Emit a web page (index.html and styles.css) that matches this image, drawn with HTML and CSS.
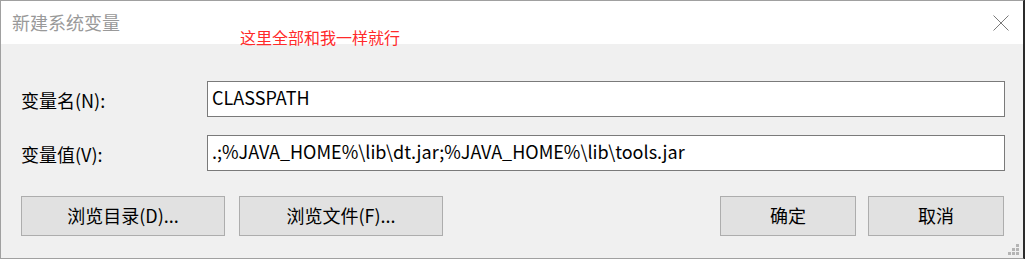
FILE: index.html
```html
<!DOCTYPE html>
<html lang="zh-CN">
<head>
<meta charset="utf-8">
<title>新建系统变量</title>
<link rel="stylesheet" href="styles.css">
</head>
<body>
<div class="window">
  <div class="titlebar">
    <span class="title">新建系统变量</span>
    <span class="close" aria-label="关闭">
      <svg width="16" height="16" viewBox="0 0 16 16"><path d="M0.5 0.5 L15.5 15.5 M15.5 0.5 L0.5 15.5" stroke="#7a7a7a" stroke-width="1" fill="none"/></svg>
    </span>
  </div>
  <div class="note">这里全部和我一样就行</div>
  <div class="content">
    <div class="form">
      <label class="label">变量名(N):</label>
      <div class="field">CLASSPATH</div>
      <label class="label">变量值(V):</label>
      <div class="field">.;%JAVA_HOME%\lib\dt.jar;%JAVA_HOME%\lib\tools.jar</div>
    </div>
    <div class="buttons">
      <div class="group">
        <button class="btn wide">浏览目录(D)...</button>
        <button class="btn wide">浏览文件(F)...</button>
      </div>
      <div class="group right">
        <button class="btn">确定</button>
        <button class="btn">取消</button>
      </div>
    </div>
    <div class="grip">
      <svg width="12" height="12" viewBox="0 0 12 12" fill="#b4b4b4">
        <rect x="8" y="0" width="3" height="3"/>
        <rect x="4" y="4" width="3" height="3"/><rect x="8" y="4" width="3" height="3"/>
        <rect x="0" y="8" width="3" height="3"/><rect x="4" y="8" width="3" height="3"/><rect x="8" y="8" width="3" height="3"/>
      </svg>
    </div>
  </div>
</div>
</body>
</html>
```
FILE: styles.css
```css
html, body {
  margin: 0;
  padding: 0;
  background: #2b2b2b;
}
body {
  width: 1025px;
  height: 259px;
  overflow: hidden;
  font-family: "Noto Sans CJK SC", "Noto Sans", sans-serif;
}
.window {
  position: relative;
  box-sizing: border-box;
  width: 1024px;
  height: 259px;
  border: 1px solid #a0a0a0;
  border-right-color: #2b2b2b;
  background: #f0f0f0;
  display: flex;
  flex-direction: column;
}
.titlebar {
  height: 43px;
  background: #ffffff;
  display: flex;
  align-items: center;
  justify-content: space-between;
  padding: 0 14px 0 11px;
  flex: none;
}
.title {
  font-size: 18px;
  color: #999999;
  line-height: 1;
  margin-top: -2px;
}
.close {
  display: flex;
  width: 16px;
  height: 16px;
  margin-top: 1px;
}
.note {
  position: absolute;
  left: 239px;
  top: 25px;
  font-size: 16px;
  line-height: 22px;
  color: #ff2a2a;
}
.content {
  position: relative;
  flex: 1;
  padding: 37px 18px 0 20px;
}
.form {
  display: grid;
  grid-template-columns: 186px 1fr;
  grid-auto-rows: 36px;
  row-gap: 18px;
  align-items: center;
}
.label {
  font-size: 18px;
  color: #000;
  line-height: 1;
  padding-top: 2px;
}
.field {
  box-sizing: border-box;
  height: 36px;
  background: #ffffff;
  border: 1px solid #7a7a7a;
  font-size: 18px;
  line-height: 30px;
  padding: 0 0 3px 4px;
  color: #000;
  white-space: nowrap;
}
.buttons {
  display: flex;
  justify-content: space-between;
  margin-top: 25px;
  margin-right: 1px;
}
.group {
  display: flex;
  gap: 14px;
}
.group.right {
  gap: 12px;
}
.btn {
  box-sizing: border-box;
  width: 136px;
  height: 40px;
  background: #e1e1e1;
  border: 1px solid #adadad;
  font-family: "Noto Sans CJK SC", "Noto Sans", sans-serif;
  font-size: 18px;
  color: #000;
  padding: 0 0 2px;
  margin: 0;
}
.btn.wide {
  width: 204px;
}
.grip {
  position: absolute;
  right: 3px;
  bottom: 2px;
  display: flex;
}
```
